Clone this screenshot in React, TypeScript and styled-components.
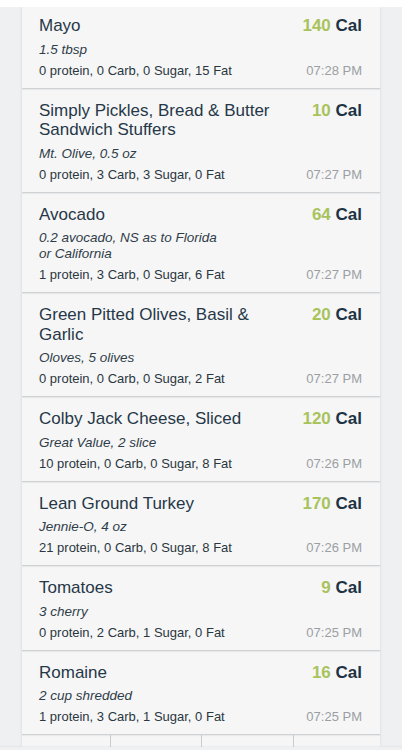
import styled, { createGlobalStyle } from 'styled-components'

type Entry = {
  name: string
  kcal: number
  serving: string
  macros: string
  time: string
}

const entries: Entry[] = [
  {
    name: 'Mayo',
    kcal: 140,
    serving: '1.5 tbsp',
    macros: '0 protein, 0 Carb, 0 Sugar, 15 Fat',
    time: '07:28 PM',
  },
  {
    name: 'Simply Pickles, Bread & Butter Sandwich Stuffers',
    kcal: 10,
    serving: 'Mt. Olive, 0.5 oz',
    macros: '0 protein, 3 Carb, 3 Sugar, 0 Fat',
    time: '07:27 PM',
  },
  {
    name: 'Avocado',
    kcal: 64,
    serving: '0.2 avocado, NS as to Florida or California',
    macros: '1 protein, 3 Carb, 0 Sugar, 6 Fat',
    time: '07:27 PM',
  },
  {
    name: 'Green Pitted Olives, Basil & Garlic',
    kcal: 20,
    serving: 'Oloves, 5 olives',
    macros: '0 protein, 0 Carb, 0 Sugar, 2 Fat',
    time: '07:27 PM',
  },
  {
    name: 'Colby Jack Cheese, Sliced',
    kcal: 120,
    serving: 'Great Value, 2 slice',
    macros: '10 protein, 0 Carb, 0 Sugar, 8 Fat',
    time: '07:26 PM',
  },
  {
    name: 'Lean Ground Turkey',
    kcal: 170,
    serving: 'Jennie-O, 4 oz',
    macros: '21 protein, 0 Carb, 0 Sugar, 8 Fat',
    time: '07:26 PM',
  },
  {
    name: 'Tomatoes',
    kcal: 9,
    serving: '3 cherry',
    macros: '0 protein, 2 Carb, 1 Sugar, 0 Fat',
    time: '07:25 PM',
  },
  {
    name: 'Romaine',
    kcal: 16,
    serving: '2 cup shredded',
    macros: '1 protein, 3 Carb, 1 Sugar, 0 Fat',
    time: '07:25 PM',
  },
]

export default function App() {
  return (
    <>
      <GlobalStyle />
      <Screen>
        <TopEdge />
        <Scroller>
          <Column>
            {entries.map((e) => (
              <FoodCard key={e.name + e.time}>
                <HeadRow>
                  <FoodName>{e.name}</FoodName>
                  <Calories>
                    <CalNumber>{e.kcal}</CalNumber> Cal
                  </Calories>
                </HeadRow>
                <Serving>{e.serving}</Serving>
                <InfoRow>
                  <Macros>{e.macros}</Macros>
                  <Time>{e.time}</Time>
                </InfoRow>
              </FoodCard>
            ))}
            <ActionRow>
              <ActionCell />
              <ActionCell />
              <ActionCell />
              <ActionCell />
            </ActionRow>
          </Column>
        </Scroller>
        <BottomEdge />
      </Screen>
    </>
  )
}

const GlobalStyle = createGlobalStyle`
  html, body {
    margin: 0;
    padding: 0;
    background: #eff0f2;
  }

  body {
    font-family: 'Liberation Sans', Arial, sans-serif;
  }
`

const Screen = styled.div`
  height: 750px;
  display: flex;
  flex-direction: column;
  overflow: hidden;
  background: #eff0f2;
`

const TopEdge = styled.div`
  height: 7px;
  flex-shrink: 0;
  background: #ffffff;
  position: relative;
  z-index: 1;
`

const Scroller = styled.div`
  flex: 1;
  overflow: hidden;
  padding: 0 22px;
`

const Column = styled.div`
  background: #f6f6f7;
  box-shadow: 0 0 3px rgba(0, 0, 0, 0.1);
  display: flex;
  flex-direction: column;
`

const FoodCard = styled.div`
  padding: 12px 18px 9px 17px;
  border-bottom: 1px solid #cfd2d5;
  box-shadow: 0 1px 1px rgba(0, 0, 0, 0.05);

  &:first-child {
    padding-top: 9px;
  }
`

const HeadRow = styled.div`
  display: flex;
  justify-content: space-between;
  align-items: flex-start;
  gap: 12px;
`

const FoodName = styled.div`
  max-width: 250px;
  font-size: 17px;
  line-height: 19.5px;
  color: #263847;
`

const Calories = styled.div`
  font-size: 17px;
  line-height: 19.5px;
  font-weight: bold;
  color: #1d3344;
  white-space: nowrap;
`

const CalNumber = styled.span`
  color: #a8c35c;
`

const Serving = styled.div`
  margin-top: 6px;
  max-width: 190px;
  font-size: 13.5px;
  line-height: 16px;
  font-style: italic;
  color: #2f3d48;
`

const InfoRow = styled.div`
  margin-top: 5px;
  display: flex;
  justify-content: space-between;
  align-items: baseline;
`

const Macros = styled.div`
  font-size: 13px;
  line-height: 16px;
  color: #2b3640;
`

const Time = styled.div`
  font-size: 13px;
  line-height: 16px;
  color: #9b9fa3;
`

const ActionRow = styled.div`
  display: grid;
  grid-template-columns: 88px 91px 92px 1fr;
  height: 12px;
`

const ActionCell = styled.div`
  border-left: 1px solid #c9cccf;

  &:first-child {
    border-left: 0;
  }
`

const BottomEdge = styled.div`
  height: 3px;
  flex-shrink: 0;
  background: #eff0f2;
  box-shadow: 0 -1px 1px rgba(0, 0, 0, 0.04);
  position: relative;
  z-index: 1;
`
